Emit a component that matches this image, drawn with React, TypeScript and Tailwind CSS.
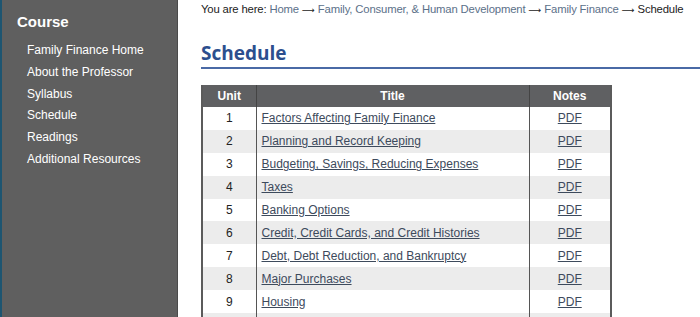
import React from 'react';

const navItems = [
    'Family Finance Home',
    'About the Professor',
    'Syllabus',
    'Schedule',
    'Readings',
    'Additional Resources',
];

const units = [
    'Factors Affecting Family Finance',
    'Planning and Record Keeping',
    'Budgeting, Savings, Reducing Expenses',
    'Taxes',
    'Banking Options',
    'Credit, Credit Cards, and Credit Histories',
    'Debt, Debt Reduction, and Bankruptcy',
    'Major Purchases',
    'Housing',
    'Insurance',
];

const Arrow = () => <span className="mx-[3px] font-['DejaVu_Sans',sans-serif] text-[9px]">⟶</span>;

const Sidebar: React.FC = () => (
    <aside className="relative w-[178px] shrink-0 bg-[#5f5f5f] border-r border-[#4a4a4a] pl-[17px] pt-[12px]">
        <div className="absolute left-0 top-0 bottom-0 w-[2px] bg-[#1d5571]" />
        <h2 className="text-[15px] font-bold text-white leading-[20px]">Course</h2>
        <ul className="mt-[8px] pl-[10px]">
            {navItems.map(item => (
                <li key={item} className="text-[12px] text-white leading-[21.8px]">
                    <a href="#">{item}</a>
                </li>
            ))}
        </ul>
    </aside>
);

const App: React.FC = () => {
    return (
        <div className="flex h-[317px] w-[700px] overflow-hidden bg-white font-['Liberation_Sans',Arial,sans-serif]">
            <Sidebar />
            <main className="min-w-0 flex-1 pl-[23px] pt-[1px]">
                <p className="whitespace-nowrap text-[11.3px] leading-[16px] tracking-[-0.15px] text-[#222]">
                    You are here: <span className="text-[#5b7089]">Home</span><Arrow /><span className="text-[#5b7089]">Family, Consumer, &amp; Human Development</span><Arrow /><span className="text-[#5b7089]">Family Finance</span><Arrow />Schedule
                </p>
                <h1 className="mt-[22px] border-b-2 border-[#4a6aa6] pb-[1px] font-['Open_Sans',sans-serif] text-[19px] font-bold leading-[26px] text-[#2c4f8e]">
                    Schedule
                </h1>
                <table className="mt-[16px] w-[411px] border-collapse border-x-2 border-[#5b5b5b] text-[12px] text-[#222]">
                    <thead>
                        <tr className="h-[22px] bg-[#5f6062] text-white">
                            <th className="w-[54px] border-r border-[#444] font-bold">Unit</th>
                            <th className="w-[273px] border-r border-[#444] font-bold">Title</th>
                            <th className="font-bold">Notes</th>
                        </tr>
                    </thead>
                    <tbody>
                        {units.map((title, i) => (
                            <tr key={title} className={`h-[22.9px] ${i % 2 === 1 ? 'bg-[#ececec]' : 'bg-white'}`}>
                                <td className="border-r border-[#555] text-center">{i + 1}</td>
                                <td className="border-r border-[#555] pl-[5px]">
                                    <a href="#" className="text-[#3d4a5c] underline">{title}</a>
                                </td>
                                <td className="text-center">
                                    <a href="#" className="text-[#3d4a5c] underline">PDF</a>
                                </td>
                            </tr>
                        ))}
                    </tbody>
                </table>
            </main>
        </div>
    );
};

export default App;
